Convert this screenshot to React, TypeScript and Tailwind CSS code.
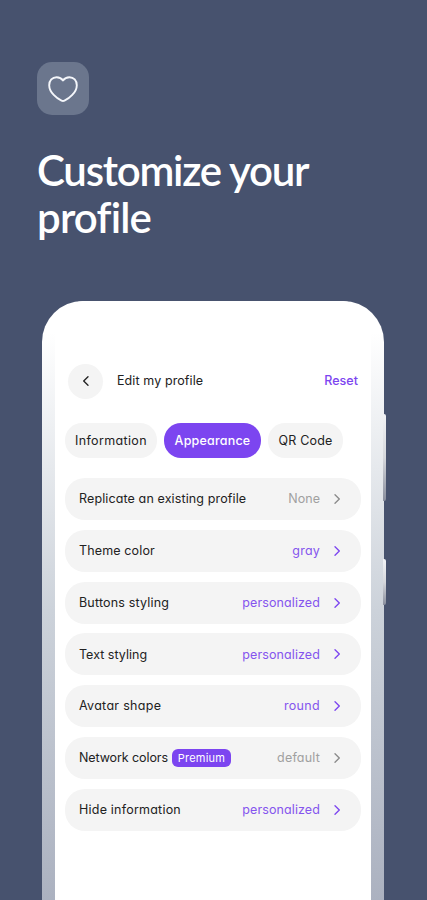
type Tone = 'accent' | 'muted'

interface Row {
  label: string
  labelTracking: string
  value: string
  valueTracking: string
  tone: Tone
  premium?: boolean
}

const ROWS: Row[] = [
  { label: 'Replicate an existing profile', labelTracking: 'tracking-[0.12px]', value: 'None', valueTracking: 'tracking-[0.05px]', tone: 'muted' },
  { label: 'Theme color', labelTracking: 'tracking-[0.14px]', value: 'gray', valueTracking: 'tracking-[0.2px]', tone: 'accent' },
  { label: 'Buttons styling', labelTracking: 'tracking-[0.18px]', value: 'personalized', valueTracking: 'tracking-[0.1px]', tone: 'accent' },
  { label: 'Text styling', labelTracking: 'tracking-[0.02px]', value: 'personalized', valueTracking: 'tracking-[0.1px]', tone: 'accent' },
  { label: 'Avatar shape', labelTracking: 'tracking-[0.3px]', value: 'round', valueTracking: 'tracking-[0.33px]', tone: 'accent' },
  { label: 'Network colors', labelTracking: 'tracking-[-0.09px]', value: 'default', valueTracking: 'tracking-[0.2px]', tone: 'muted', premium: true },
  { label: 'Hide information', labelTracking: 'tracking-[0.22px]', value: 'personalized', valueTracking: 'tracking-[0.1px]', tone: 'accent' },
]

const TONES: Record<Tone, string> = {
  accent: 'text-[#8555ee]',
  muted: 'text-[#a0a0a0]',
}

const CHEVRON_TONES: Record<Tone, string> = {
  accent: 'text-[#7c45f0]',
  muted: 'text-[#8a8a8a]',
}

function HeartIcon() {
  return (
    <svg viewBox="0 0 30 28" className="h-[28px] w-[30px]" fill="none" stroke="#f5f7fb" strokeWidth="1.9" strokeLinejoin="round">
      <path d="M15 5.400C13.300 3 11 2.200 8.600 2.200C4.300 2.200 1.200 5.600 1.200 10.200C1.200 17.600 9.200 23.600 13.500 25.700C14.500 26.200 15.500 26.200 16.500 25.700C20.800 23.600 28.800 17.600 28.800 10.200C28.800 5.600 25.700 2.200 21.400 2.200C19 2.200 16.700 3 15 5.400Z" />
    </svg>
  )
}

function Chevron({ className }: { className?: string }) {
  return (
    <svg viewBox="0 0 8 12" className={`h-3 w-2 shrink-0 ${className ?? ''}`} fill="none" stroke="currentColor" strokeWidth="1.35" strokeLinecap="round" strokeLinejoin="round">
      <path d="M2 1.800L6.300 6L2 10.200" />
    </svg>
  )
}

function SettingRow({ row }: { row: Row }) {
  return (
    <button type="button" className="flex h-[42px] w-full items-center rounded-[20px] bg-[#f4f4f4] pr-5 pl-[14px] text-left text-[12.500px]">
      <span className={`pt-[1.500px] whitespace-nowrap text-[#222222] ${row.labelTracking}`}>{row.label}</span>
      {row.premium && (
        <span className="ml-1 flex h-[18px] w-[59px] items-center justify-center rounded-[6px] bg-[#7c45f0] text-[11px] tracking-[0.25px] text-white">Premium</span>
      )}
      <span className={`ml-auto pt-[1.500px] whitespace-nowrap ${row.valueTracking} ${TONES[row.tone]}`}>{row.value}</span>
      <Chevron className={`ml-[13px] ${CHEVRON_TONES[row.tone]}`} />
    </button>
  )
}

export default function App() {
  return (
    <div className="h-[900px] w-[427px] overflow-hidden bg-[#47526e] font-['Inter',sans-serif] [font-feature-settings:'cv11']">
      <div className="h-[301px] pt-[62px] pl-[37px]">
        <div className="flex h-[53px] w-[52px] items-center justify-center rounded-[15px] bg-[#6b768d]">
          <HeartIcon />
        </div>
        <h1 className="mt-[32px] font-['Lato',sans-serif] text-[42px] leading-[47px] font-semibold tracking-[-1.25px] whitespace-nowrap text-white">
          Customize your
          <br />
          <span className="tracking-[-0.8px]">profile</span>
        </h1>
      </div>

      <div className="relative ml-[42px] h-[620px] w-[341.500px] rounded-t-[41px] bg-linear-to-b from-white from-5% via-[#ccd2da] via-50% to-[#a9afbe] px-[13px]">
        {/* side buttons */}
        <div className="absolute top-[113px] left-[341px] h-[87px] w-[2.500px] rounded-r-xs bg-linear-to-b from-[#f2f3f6] via-[#d5d7dc] to-[#8a8f9e]" />
        <div className="absolute top-[258px] left-[341px] h-[46px] w-[2.500px] rounded-r-xs bg-linear-to-b from-[#f2f3f6] via-[#d5d7dc] to-[#8a8f9e]" />

        <div className="h-full w-[316px] rounded-t-[30px] bg-white px-[10px] pt-[62px]">
          <header className="flex h-[36px] items-center pr-[3px] pl-[3px] text-[12.500px]">
            <button type="button" className="flex h-[35px] w-[35px] items-center justify-center rounded-full bg-[#f4f4f4] text-[#222222]">
              <Chevron className="rotate-180" />
            </button>
            <span className="ml-[14px] tracking-[0.1px] text-[#222222]">Edit my profile</span>
            <span className="ml-auto font-medium tracking-[0.03px] text-[#7c45f0]">Reset</span>
          </header>

          <nav className="mt-[24px] flex h-[35px] gap-[7px] text-[12.500px] text-[#222222]">
            <button type="button" className="w-[92px] rounded-[17px] bg-[#f4f4f4] pt-[1.500px] tracking-[0.35px]">Information</button>
            <button type="button" className="w-[97px] rounded-[17px] bg-[#7c45f0] pt-[1.500px] font-medium tracking-[0.2px] text-white">Appearance</button>
            <button type="button" className="w-[75px] rounded-[17px] bg-[#f4f4f4] pt-[1.500px] tracking-[0.2px]">QR Code</button>
          </nav>

          <div className="mt-[20px] flex flex-col gap-[9.750px]">
            {ROWS.map((row) => (
              <SettingRow key={row.label} row={row} />
            ))}
          </div>
        </div>
      </div>
    </div>
  )
}
